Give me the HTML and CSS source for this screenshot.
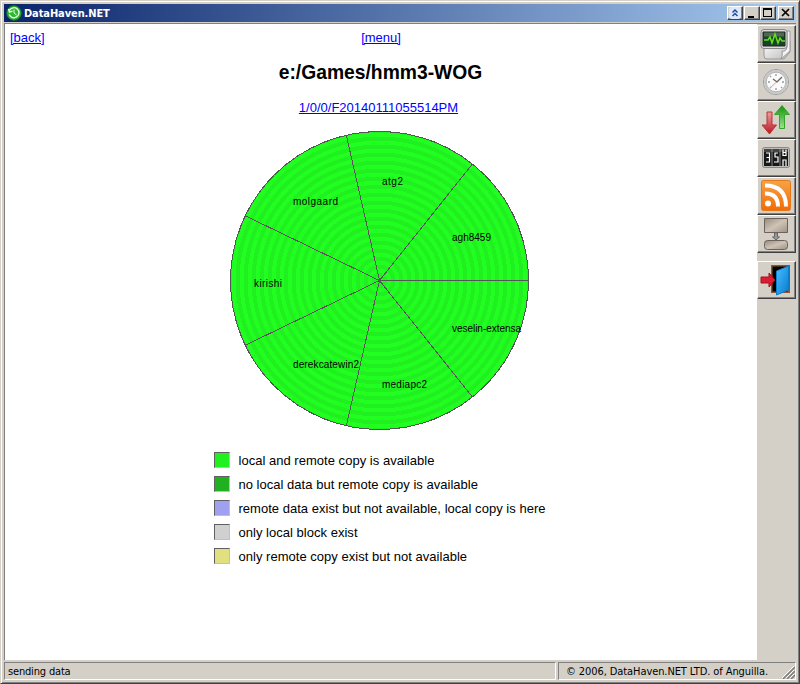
FILE: index.html
```html
<!DOCTYPE html>
<html lang="en">
<head>
<meta charset="utf-8">
<title>DataHaven.NET</title>
<link rel="stylesheet" href="styles.css">
</head>
<body>
<div class="window">
  <header class="titlebar">
    <svg class="logo" width="16" height="16" viewBox="0 0 16 16"><circle cx="8" cy="8" r="7.2" fill="#30b630" stroke="#168b20"/><path d="M3.5 5.5A5 5 0 1 1 3.3 9.5M2.5 4l1 3.2 3-1" fill="none" stroke="#e7ffe7" stroke-width="1.3"/><path d="M8 4.5V8l2.6 2" fill="none" stroke="#e7ffe7"/></svg>
    <h1 class="title">DataHaven.NET</h1>
    <div class="controls">
      <button class="ctl roll"><svg width="14" height="12"><rect x="1" width="12" height="12" rx="3" fill="#dce8ff"/><path d="M4.5 5.500L7 3l2.500 2.500M4.500 9L7 6.500 9.500 9" fill="none" stroke="#234b9b" stroke-width="1.500"/></svg></button>
      <button class="ctl"><svg width="14" height="12" shape-rendering="crispEdges"><path d="M3 9h6v2H3z"/></svg></button>
      <button class="ctl"><svg width="14" height="12" shape-rendering="crispEdges"><path d="M2 1h9v9H2zM3 3v6h7V3z" fill-rule="evenodd"/></svg></button>
      <button class="ctl close"><svg width="14" height="12"><path d="M3 2l7 7M10 2l-7 7" stroke="#000" stroke-width="1.700"/></svg></button>
    </div>
  </header>
  <div class="body">
    <main class="page">
      <nav class="links"><a href="#">[back]</a><a href="#">[menu]</a><span></span></nav>
      <h2 class="path">e:/Games/hmm3-WOG</h2>
      <a class="backup" href="#">1/0/0/F20140111055514PM</a>
      <svg class="pie" width="300" height="300" viewBox="230 131 300 300">
        <defs>
          <radialGradient id="rings" gradientUnits="userSpaceOnUse" cx="379.5" cy="280.5" r="8" spreadMethod="repeat">
            <stop offset="0" stop-color="#20ff20"/><stop offset=".5" stop-color="#20ff20"/>
            <stop offset=".5" stop-color="#20f020"/><stop offset="1" stop-color="#20f020"/>
          </radialGradient>
        </defs>
        <circle cx="379.5" cy="280.5" r="149" fill="url(#rings)" stroke="#555" shape-rendering="crispEdges"/>
        <path d="M379.5 280.5H528.5M379.5 280.5L472.4 164M379.5 280.5L346.3 135.2M379.5 280.5L245.3 215.8M379.5 280.5L245.3 345.2M379.5 280.5L346.3 425.8M379.5 280.5L472.4 397" stroke="#5c505c" fill="none" shape-rendering="crispEdges"/>
        <g class="hosts">
          <text x="382" y="185" textLength="21">atg2</text>
          <text x="293" y="205" textLength="45">molgaard</text>
          <text x="452" y="241" textLength="39">agh8459</text>
          <text x="254" y="287" textLength="28">kirishi</text>
          <text x="452" y="332" textLength="69">veselin-extensa</text>
          <text x="293" y="368" textLength="66">derekcatewin2</text>
          <text x="382" y="388" textLength="45">mediapc2</text>
        </g>
      </svg>
      <ul class="legend">
        <li><i class="swatch both"></i>local and remote copy is available</li>
        <li><i class="swatch remote"></i>no local data but remote copy is available</li>
        <li><i class="swatch offline"></i>remote data exist but not available, local copy is here</li>
        <li><i class="swatch local"></i>only local block exist</li>
        <li><i class="swatch lost"></i>only remote copy exist but not available</li>
      </ul>
    </main>
    <aside class="toolbar">
      <button class="tool"><svg width="32" height="32" viewBox="0 0 32 32"><defs><linearGradient id="paper" x2="1" y2="1"><stop stop-color="#fff"/><stop offset="1" stop-color="#bbb"/></linearGradient></defs><path d="M4 13h26v11l-6 7H7q-3 0-3-3z" fill="url(#paper)" stroke="#999"/><path d="M27 3h3v20l-9 8q2-4 1-8 4 1 5-4z" fill="#f4f4f4" stroke="#999"/><rect x="1" y="1.500" width="26" height="19" rx="3" fill="#ddd" stroke="#888"/><path d="M3 4h22v14H3z" fill="#174426" stroke="#222"/><path d="M4 4.500h20v4H4z" fill="#526855"/><path d="M4 12h4l2-3 2 6 3-9 3 9 2-5 2 3h3" fill="none" stroke="#66e01c" stroke-width="1.500"/></svg></button>
      <button class="tool"><svg width="32" height="32" viewBox="0 0 32 32"><circle cx="16" cy="16" r="12.500" fill="#f4f4f4" stroke="#999"/><circle cx="16" cy="16" r="11" fill="none" stroke="#c9c9c9" stroke-width="2"/><circle cx="16" cy="16" r="9.800" fill="#fafafa" stroke="#999" stroke-width=".7"/><path d="M16 8v2M16 22v2M8 16h2M22 16h2M10 10l1 1M21 21l1 1M10 22l1-1" stroke="#999" stroke-width="1.300"/><path d="M10 22l12-11" stroke="#ed9999"/><path d="M13 13l4 3 5-5" fill="none" stroke="#666" stroke-width="1.300"/></svg></button>
      <button class="tool"><svg width="32" height="32" viewBox="0 0 32 32"><defs><linearGradient id="down" x2="0" y2="1"><stop stop-color="#eba0a0"/><stop offset="1" stop-color="#bd1420"/></linearGradient><linearGradient id="up" x2="0" y2="1"><stop stop-color="#16920c"/><stop offset="1" stop-color="#9ae58c"/></linearGradient></defs><path d="M7 8h5v13h4.500l-7 9-7.500-9h5z" fill="url(#down)" stroke="#b33"/><path d="M22 1.500l7.500 9h-5v14h-5v-14h-5z" fill="url(#up)" stroke="#37a52c"/></svg></button>
      <button class="tool"><svg width="32" height="32" viewBox="0 0 32 32"><rect x="2.500" y="5.500" width="27" height="20" rx="2" fill="#bbb" stroke="#888"/><path d="M4 7h24v17H4z" fill="#171717"/><path d="M4 7h24v3H4z" fill="#444"/><path d="M12 7v17M20 7v17" stroke="#888"/><g fill="none" stroke="#fff" stroke-width="1.200"><path d="M6 11h3.500v9H6M6.500 15.500h3M18 11h-3v4h3v5h-4M23 7.500v6h3v-6M23 10.500h3M23 24v-6h3v6"/></g></svg></button>
      <button class="tool"><svg width="32" height="32" viewBox="0 0 32 32"><defs><linearGradient id="orange" x2="0" y2="1"><stop stop-color="#f6a348"/><stop offset="1" stop-color="#f06c08"/></linearGradient></defs><rect x="1.500" y=".5" width="29" height="30" rx="2" fill="url(#orange)" stroke="#e77717"/><circle cx="8" cy="23.500" r="3" fill="#fff"/><path d="M5 13.500q13 0 13 13M5 5.500q21 0 21 21" fill="none" stroke="#fff" stroke-width="4"/></svg></button>
      <button class="tool"><svg width="32" height="32" viewBox="0 0 32 32"><defs><linearGradient id="stone" x2="1" y2="1"><stop stop-color="#958b80"/><stop offset=".5" stop-color="#cec3b5"/><stop offset="1" stop-color="#9d9285"/></linearGradient></defs><path d="M4.500.5h23v14h-23z" fill="url(#stone)" stroke="#6c635b"/><path d="M14.500 15v4h-2l3.500 3 3.500-3h-2v-4z" fill="#999" stroke="#666"/><rect x="4.500" y="22.500" width="23" height="9" rx="3" fill="url(#stone)" stroke="#6c635b"/></svg></button>
      <button class="tool exit"><svg width="32" height="32" viewBox="0 0 32 32"><defs><linearGradient id="door" x2="1" y2="1"><stop stop-color="#48c0ff"/><stop offset="1" stop-color="#0878cf"/></linearGradient></defs><path d="M11 1h19v28H11z" fill="#8f5627"/><path d="M12.500 2.500h15v25h-15z"/><path d="M16.500 7l12-5v24l-12 5z" fill="url(#door)" stroke="#087dc8"/><path d="M1 13h8V9l6 7-6 7v-4H1z" fill="#dd1c32" stroke="#a81020"/></svg></button>
    </aside>
  </div>
  <footer class="status">
    <div class="cell message">sending data</div>
    <div class="cell copyright"><span>© 2006, DataHaven.NET LTD. of Anguilla.</span><svg class="grip" width="13" height="13"><path d="M1 13L13 1M5 13l8-8M9 13l4-4" stroke="#808080" stroke-width="1.600"/><path d="M0 12L12 0M4 12l8-8M8 12l4-4" stroke="#fff"/></svg></div>
  </footer>
</div>
</body>
</html>
```

FILE: styles.css
```css
* { box-sizing: border-box; }
body { margin: 0; font: 13px "Liberation Sans", Arial, sans-serif; color: #000; }
.window {
  width: 800px; height: 684px; padding: 3px; background: #d4d0c8;
  border: 1px solid; border-color: #d4d0c8 #404040 #404040 #d4d0c8;
  box-shadow: inset 1px 1px #fff, inset -1px -1px #808080;
  display: flex; flex-direction: column;
}
.titlebar {
  height: 18px; flex: none; display: flex; align-items: center; padding: 0 2px;
  background: linear-gradient(90deg, #0a246a, #a6caf0);
}
.title { margin: 0 0 0 2px; flex: 1; color: #fff; font: bold 11px "DejaVu Sans Condensed", sans-serif; letter-spacing: -.1px; }
.controls { display: flex; }
.ctl {
  width: 16px; height: 14px; padding: 0; border: 1px solid; border-color: #fff #404040 #404040 #fff;
  background: #d4d0c8; display: flex; box-shadow: inset -1px -1px #808080;
}
.roll { margin-right: 1px; }
.close { margin-left: 2px; }
.body { flex: 1; min-height: 0; display: flex; margin-top: 1px; }
.page {
  width: 753px; background: #fff; border-left: 1px solid #808080; border-top: 1px solid #808080;
  display: flex; flex-direction: column; align-items: center;
}
a { color: #00f; }
.links { width: 100%; height: 26px; padding: 6px 5px 0; display: grid; grid-template-columns: 1fr auto 1fr; line-height: 15px; }
.path { margin: 10px 1px 0 0; font-size: 19.3px; line-height: 25px; }
.backup { margin: 15px 5px 0 0; line-height: 15px; }
.pie { margin: 16px 2px 0 0; flex: none; }
.hosts { font-size: 10px; }
.legend { list-style: none; margin: 17px 2px 0 0; padding: 0; display: flex; flex-direction: column; letter-spacing: .025px; }
.legend li { height: 24px; display: flex; align-items: center; }
.swatch { width: 16px; height: 16px; margin-right: 8px; border: 1px solid; border-color: #606060 #c0c0c0 #c0c0c0 #606060; }
.both { background: #20f020; }
.remote { background: #20b020; }
.offline { background: #a0a0f0; }
.local { background: #d0d0d0; }
.lost { background: #e0e080; }
.toolbar { flex: 1; border-top: 1px solid #808080; padding-top: 1px; }
.tool {
  width: 39px; height: 38px; padding: 2px; display: flex; background: #d4d0c8;
  border: 1px solid; border-color: #fff #404040 #404040 #fff; box-shadow: inset -1px -1px #808080;
}
.exit { margin-top: 8px; }
.status { height: 20px; flex: none; display: flex; gap: 2px; padding-top: 2px; font: 11px "DejaVu Sans Condensed", sans-serif; }
.cell { border: 1px solid; border-color: #808080 #fff #fff #808080; display: flex; align-items: center; height: 18px; padding-left: 3px; }
.message { width: 552px; letter-spacing: -.17px; }
.copyright { flex: 1; padding-left: 7px; white-space: nowrap; letter-spacing: -.09px; }
.grip { margin: 3px 0 0 auto; }
```
